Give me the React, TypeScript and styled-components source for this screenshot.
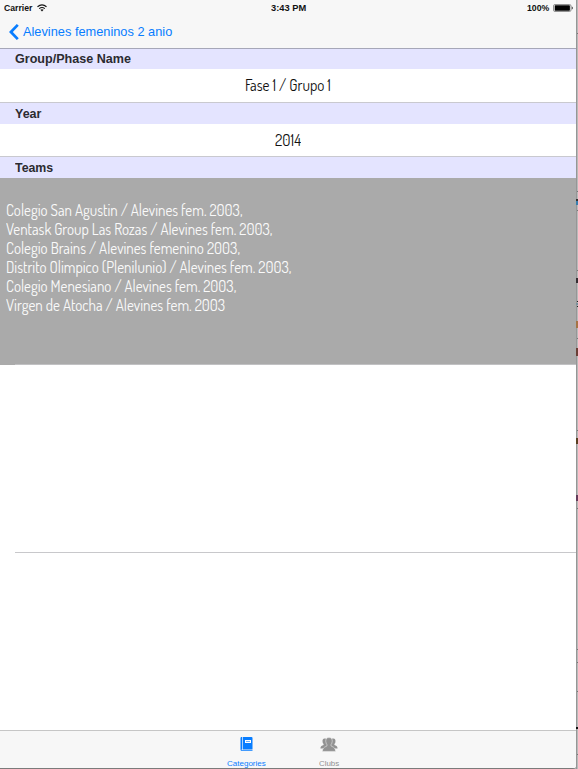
import React, { ReactNode, useLayoutEffect, useRef } from 'react';
import styled, { createGlobalStyle } from 'styled-components';

const Global = createGlobalStyle`
  * { box-sizing: border-box; }
  html, body, #root { margin: 0; height: 100%; overflow: hidden; }
  body { background: #fff; font-family: "Liberation Sans", Arial, sans-serif; color: #222; }
`;

const Screen = styled.div`
  width: 578px;
  height: 769px;
  display: grid;
  grid-template-columns: 576px 2px;
  background: #b2b2b2;
`;
const Device = styled.main`
  height: 769px;
  display: flex;
  flex-direction: column;
  background: #fff;
  border-bottom: 1px solid #7b7b7b;
  border-bottom-right-radius: 3px;
  overflow: hidden;
`;
const TopBar = styled.header`
  height: 49px;
  flex: none;
  background: #f7f7f7;
  border-bottom: 1px solid #a6a7b8;
`;
const StatusBar = styled.div`
  height: 16px;
  display: grid;
  grid-template-columns: 1fr auto 1fr;
  align-items: center;
  padding: 0 3px 0 4px;
  color: #111;
`;
const StatusGroup = styled.div<{ $end?: boolean }>`
  display: flex;
  align-items: center;
  gap: 4px;
  justify-content: ${p => (p.$end ? 'flex-end' : 'flex-start')};
  svg { margin-top: -1px; }
`;
const BackButton = styled.button`
  display: flex;
  align-items: center;
  gap: 4px;
  height: 32px;
  padding: 0 0 0 9px;
  border: 0;
  background: none;
  color: #087dff;
  font-family: inherit;
`;
const SectionHeader = styled.h2<{ $height: number }>`
  margin: 0;
  height: ${p => p.$height}px;
  flex: none;
  display: flex;
  align-items: center;
  padding-left: 15px;
  background: #e4e4ff;
  color: #2b2b30;
`;
const ValueRow = styled.div<{ $height: number }>`
  height: ${p => p.$height}px;
  flex: none;
  display: flex;
  align-items: center;
  justify-content: center;
  padding-top: 1px;
  border-bottom: 1px solid #c9c9cf;
  color: #111;
`;
const TeamsPanel = styled.section`
  height: 186px;
  flex: none;
  display: flex;
  flex-direction: column;
  padding: 23px 0 0 6px;
  background: #aaa;
  color: #fafafa;
`;
const PanelEdge = styled.div`
  height: 1px;
  flex: none;
  background: linear-gradient(90deg, #aaa 15px, #c1c1c3 15px);
`;
const TeamLine = styled.div`
  height: 18.9px;
  display: flex;
  align-items: center;
`;
const Divider = styled.hr`
  flex: none;
  width: 561px;
  height: 1px;
  margin: 0 0 0 15px;
  border: 0;
  background: #c8c8cb;
`;
const EmptyCell = styled.div<{ $height: number }>`
  height: ${p => p.$height}px;
  flex: none;
`;
const TabBar = styled.nav`
  height: 38px;
  flex: none;
  display: flex;
  justify-content: center;
  gap: 43px;
  padding-right: 1px;
  border-top: 1px solid #c6c6c6;
  background: #f7f7f7;
`;
const Tab = styled.div<{ $active?: boolean }>`
  width: 40px;
  display: flex;
  flex-direction: column;
  align-items: center;
  padding-top: 5px;
  color: ${p => (p.$active ? '#087dff' : '#929292')};
`;
const TabIcon = styled.div`
  height: 23px;
  display: flex;
  align-items: flex-start;
`;
const Edge = styled.aside`
  position: relative;
  height: 769px;
  background: linear-gradient(90deg, #969696 50%, #bababa 50%);
`;
const EdgeMark = styled.span<{ $y: number; $h: number; $color: string }>`
  position: absolute;
  right: 0;
  width: ${p => (p.$h > 1 ? 2 : 1)}px;
  top: ${p => p.$y}px;
  height: ${p => p.$h}px;
  background: ${p => p.$color};
`;
const TextBox = styled.span<{ $width: number }>`
  display: flex;
  flex: none;
  width: ${p => p.$width}px;
  white-space: nowrap;
`;
const TextRun = styled.span<{ $size: number; $weight: number; $light?: boolean }>`
  flex: none;
  transform-origin: left center;
  font-family: ${p => (p.$light ? '"Dosis", "Roboto", sans-serif' : '"Liberation Sans", Arial, sans-serif')};
  font-size: ${p => p.$size}px;
  font-weight: ${p => p.$weight};
  line-height: 1.2;
`;

interface LabelProps {
  width: number;
  size: number;
  weight?: number;
  light?: boolean;
  children: ReactNode;
}

// Condenses or widens a label to its designed width.
function Label({ width, size, weight = 400, light, children }: LabelProps) {
  const ref = useRef<HTMLSpanElement>(null);
  useLayoutEffect(() => {
    const el = ref.current;
    if (el) el.style.transform = `scaleX(${width / el.offsetWidth})`;
  }, [width, children]);
  return (
    <TextBox $width={width}>
      <TextRun ref={ref} $size={size} $weight={weight} $light={light}>{children}</TextRun>
    </TextBox>
  );
}

const WifiIcon = () => (
  <svg width="10" height="8" viewBox="0 0 10 8" fill="none" stroke="#111" strokeWidth="1.2">
    <path d="M.5 2.7Q5-.9 9.5 2.7M2.2 4.6Q5 2.4 7.8 4.6" />
    <path d="M3.4 5.7Q5 4.6 6.6 5.7L5 7.6Z" fill="#111" stroke="none" />
  </svg>
);
const BatteryIcon = () => (
  <svg width="20" height="8" viewBox="0 0 20 8">
    <rect x=".5" y=".5" width="17.5" height="7" rx="1.5" fill="#f7f7f7" stroke="#777" strokeWidth=".8" />
    <rect x="1.7" y="1.3" width="15.2" height="5.4" rx=".6" fill="#000" />
    <path d="M18.8 2.6q1 .3 1 1.4t-1 1.4z" fill="#333" />
  </svg>
);
const ChevronIcon = () => (
  <svg width="10" height="16" viewBox="0 0 10 16" fill="none" stroke="currentColor" strokeWidth="2.7">
    <path d="M8.8 .9 1.9 8 8.8 15.1" />
  </svg>
);
const BookIcon = () => (
  <svg width="13" height="17" viewBox="0 0 13 17">
    <path d="M.5 2 1 1h1.3v12.5h-.8v.7H12.5v.8H2A1.5 1.5 0 0 1 .5 13.5z" fill="currentColor" />
    <path d="M3 1h8.5a1 1 0 0 1 1 1v11.5H3z" fill="currentColor" />
    <path d="M5 4h6v3H5z" fill="#fff" />
    <path d="M6 5.5h4" stroke="currentColor" strokeWidth=".6" />
  </svg>
);
const ClubsIcon = () => (
  <svg width="18" height="18" viewBox="0 0 18 18" fill="currentColor">
    <path d="M6 2.8C3.2 2 2.2 3.7 2.6 6c.1 1 .5 1.5 1 2v1C2 9.8.5 10 .4 12.6h5l2-2.600z" />
    <path d="M12 2.8c2.8-.8 3.8.9 3.4 3.2-.1 1-.5 1.5-1 2v1c1.6.8 3.1 1 3.2 3.6h-5l-2-2.600z" />
    <path d="M9 1.6c2.7 0 3.5 1.7 3.2 4-.1 1.4-.7 2.4-1.2 3.1v1.2c1.3 1 4.5 1.2 4.6 5.5H2.4c.1-4.3 3.3-4.5 4.6-5.5V8.7C6.5 8 5.9 7 5.8 5.6c-.3-2.3.5-4 3.2-4z" stroke="#f7f7f7" strokeWidth=".5" />
  </svg>
);

const teams = [
  { text: 'Colegio San Agustin / Alevines fem. 2003,', width: 236.5 },
  { text: 'Ventask Group Las Rozas / Alevines fem. 2003,', width: 266 },
  { text: 'Colegio Brains / Alevines femenino 2003,', width: 234 },
  { text: 'Distrito Olimpico (Plenilunio) / Alevines fem. 2003,', width: 285 },
  { text: 'Colegio Menesiano / Alevines fem. 2003,', width: 230 },
  { text: 'Virgen de Atocha / Alevines fem. 2003', width: 219 },
];
const marks: [number, number, string][] = [
  [33, 1, '#777'], [191, 1, '#777'], [199, 2, '#333'], [201, 4, '#397fae'],
  [210, 1, '#777'], [270, 1, '#777'], [278, 5, '#342e32'], [301, 1, '#222'],
  [303, 2, '#78909c'], [306, 1, '#222'], [321, 7, '#a57345'], [338, 1, '#777'],
  [348, 8, '#693f36'], [430, 1, '#777'], [438, 6, '#594022'], [495, 6, '#643b5b'],
  [508, 1, '#777'], [649, 1, '#777'], [662, 1, '#777'], [691, 1, '#777'],
  [727, 2, '#111'], [754, 1, '#777'],
];

export default function App() {
  return (
    <>
      <Global />
      <Screen>
        <Device>
          <TopBar>
            <StatusBar>
              <StatusGroup>
                <Label width={28.5} size={8.5} weight={700}>Carrier</Label>
                <WifiIcon />
              </StatusGroup>
              <Label width={35} size={8.5} weight={700}>3:43 PM</Label>
              <StatusGroup $end>
                <Label width={22.5} size={8.5} weight={700}>100%</Label>
                <BatteryIcon />
              </StatusGroup>
            </StatusBar>
            <BackButton>
              <ChevronIcon />
              <Label width={149.5} size={13}>Alevines femeninos 2 anio</Label>
            </BackButton>
          </TopBar>
          <SectionHeader $height={20}><Label width={116} size={13} weight={700}>Group/Phase Name</Label></SectionHeader>
          <ValueRow $height={34}><Label width={86} size={16} light>Fase 1 / Grupo 1</Label></ValueRow>
          <SectionHeader $height={21}><Label width={26} size={13} weight={700}>Year</Label></SectionHeader>
          <ValueRow $height={33}><Label width={26} size={16} light>2014</Label></ValueRow>
          <SectionHeader $height={21}><Label width={38} size={13} weight={700}>Teams</Label></SectionHeader>
          <TeamsPanel>
            {teams.map(team => (
              <TeamLine key={team.text}>
                <Label width={team.width} size={15.6} light>{team.text}</Label>
              </TeamLine>
            ))}
          </TeamsPanel>
          <PanelEdge />
          <EmptyCell $height={187} />
          <Divider />
          <EmptyCell $height={177} />
          <TabBar>
            <Tab $active>
              <TabIcon><BookIcon /></TabIcon>
              <Label width={38.5} size={7.5}>Categories</Label>
            </Tab>
            <Tab>
              <TabIcon><ClubsIcon /></TabIcon>
              <Label width={20} size={7.5}>Clubs</Label>
            </Tab>
          </TabBar>
        </Device>
        <Edge>
          {marks.map(([y, h, color]) => <EdgeMark key={y} $y={y} $h={h} $color={color} />)}
        </Edge>
      </Screen>
    </>
  );
}
